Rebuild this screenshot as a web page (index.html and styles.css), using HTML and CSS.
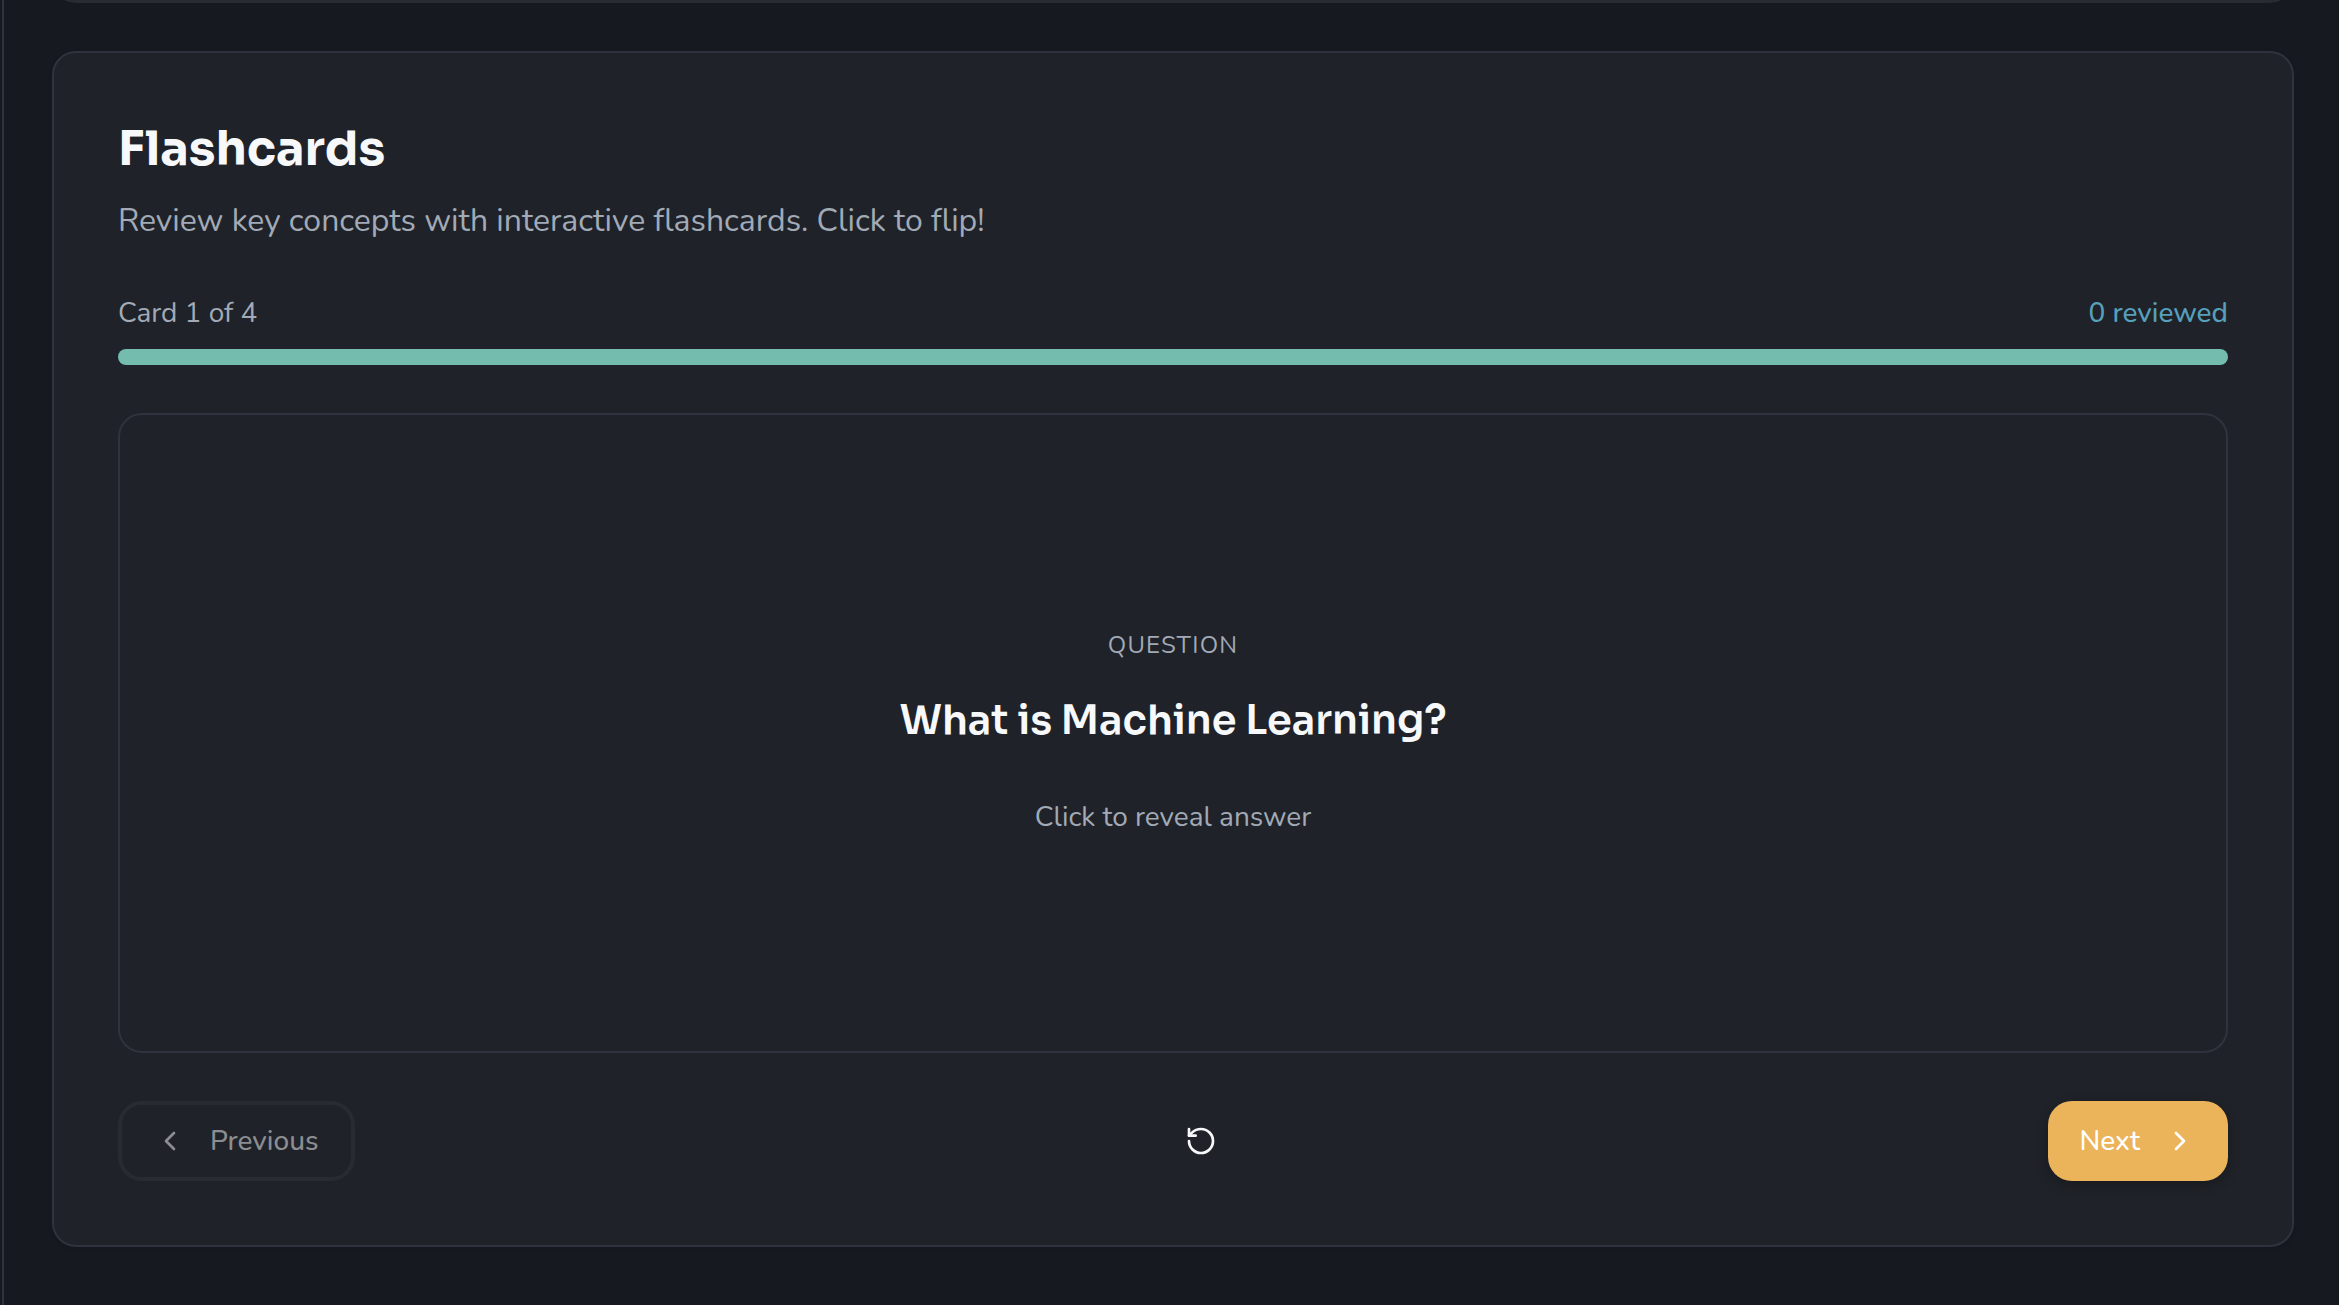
FILE: index.html
```html
<!DOCTYPE html>
<html lang="en">
<head>
  <meta charset="utf-8">
  <meta name="viewport" content="width=device-width, initial-scale=1">
  <title>Flashcards</title>
  <link rel="stylesheet" href="styles.css">
</head>
<body>
  <div class="app">
    <aside class="sidebar"></aside>
    <main class="content">
      <section class="previous-section"></section>
      <section class="panel">
        <header class="panel-header">
          <h2 class="panel-title">Flashcards</h2>
          <p class="panel-subtitle">Review key concepts with interactive flashcards. Click to flip!</p>
        </header>
        <div class="status">
          <span>Card 1 of 4</span>
          <span class="reviewed">0 reviewed</span>
        </div>
        <div class="progress" role="progressbar" aria-label="Flashcards progress"></div>
        <button class="flashcard" type="button">
          <span class="flashcard-label">QUESTION</span>
          <span class="flashcard-text">What is Machine Learning?</span>
          <span class="flashcard-hint">Click to reveal answer</span>
        </button>
        <div class="controls">
          <button class="button button-outline" type="button" disabled>
            <svg class="icon" viewBox="0 0 24 24" aria-hidden="true"><path d="m15 18-6-6 6-6"/></svg>
            Previous
          </button>
          <button class="button button-ghost" type="button" aria-label="Reset">
            <svg class="icon" viewBox="0 0 24 24" aria-hidden="true"><path d="M3 12a9 9 0 1 0 9-9 9.75 9.75 0 0 0-6.74 2.74L3 8"/><path d="M3 3v5h5"/></svg>
          </button>
          <button class="button button-primary" type="button">
            Next
            <svg class="icon" viewBox="0 0 24 24" aria-hidden="true"><path d="m9 18 6-6-6-6"/></svg>
          </button>
        </div>
      </section>
    </main>
  </div>
</body>
</html>
```

FILE: styles.css
```css
:root {
  --background: #161920;
  --surface: #1f2228;
  --border: #30323d;
  --border-dim: #292b33;
  --text: #f6f8fa;
  --muted: #a1aab6;
  --teal: #73bcae;
  --blue: #56a0bc;
  --amber: #ebb35a;
}

* {
  box-sizing: border-box;
}

body {
  margin: 0;
  background: var(--background);
  color: var(--text);
  font-family: Nunito, Lato, sans-serif;
  font-size: 28px;
  line-height: 40px;
}

.app {
  display: flex;
  min-height: 100vh;
  overflow: hidden;
}

.sidebar {
  flex: none;
  width: 4px;
  border-right: 2px solid var(--border);
}

.content {
  flex: 1;
  padding: 0 45px 48px 48px;
}

.previous-section {
  height: 64px;
  margin-top: -61px;
  margin-bottom: 48px;
  border: 4px solid var(--border-dim);
  border-radius: 24px;
}

.panel {
  padding: 64px;
  background: var(--surface);
  border: 2px solid var(--border);
  border-radius: 24px;
  box-shadow: 0 2px 4px rgba(0, 0, 0, 0.1);
}

.panel-header {
  margin-bottom: 48px;
}

.panel-title {
  margin: 0 0 16px;
  font-family: Sora, Inter, sans-serif;
  font-size: 48px;
  font-weight: 700;
  line-height: 64px;
}

.panel-subtitle {
  margin: 0;
  color: var(--muted);
  font-size: 32px;
  line-height: 48px;
}

.status {
  display: flex;
  justify-content: space-between;
  margin-bottom: 16px;
  color: var(--muted);
}

.reviewed {
  color: var(--blue);
  font-weight: 500;
}

.progress {
  height: 16px;
  margin-bottom: 48px;
  background: var(--teal);
  border-radius: 8px;
}

.flashcard {
  display: flex;
  flex-direction: column;
  align-items: center;
  justify-content: center;
  width: 100%;
  min-height: 640px;
  margin-bottom: 48px;
  padding: 64px;
  background: transparent;
  border: 2px solid var(--border);
  border-radius: 24px;
  color: var(--muted);
  font: inherit;
  cursor: pointer;
}

.flashcard-label {
  margin-bottom: 32px;
  font-size: 24px;
  line-height: 32px;
  letter-spacing: 0.05em;
}

.flashcard-text {
  margin-bottom: 48px;
  color: var(--text);
  font-family: Sora, Inter, sans-serif;
  font-size: 40px;
  font-weight: 600;
  line-height: 56px;
}

.controls {
  display: flex;
  align-items: center;
  justify-content: space-between;
}

.button {
  display: flex;
  align-items: center;
  gap: 24px;
  height: 80px;
  padding: 0 32px;
  background: transparent;
  border: 0;
  border-radius: 24px;
  color: var(--text);
  font: inherit;
  font-weight: 500;
  cursor: pointer;
}

.button-outline {
  border: 4px solid var(--border-dim);
}

.button-outline:disabled {
  color: #8b8d91;
  cursor: default;
}

.button-primary {
  background: var(--amber);
  box-shadow: 0 4px 12px rgba(0, 0, 0, 0.25);
  color: #fff;
}

.icon {
  width: 32px;
  height: 32px;
  fill: none;
  stroke: currentColor;
  stroke-width: 2;
  stroke-linecap: round;
  stroke-linejoin: round;
}
```
